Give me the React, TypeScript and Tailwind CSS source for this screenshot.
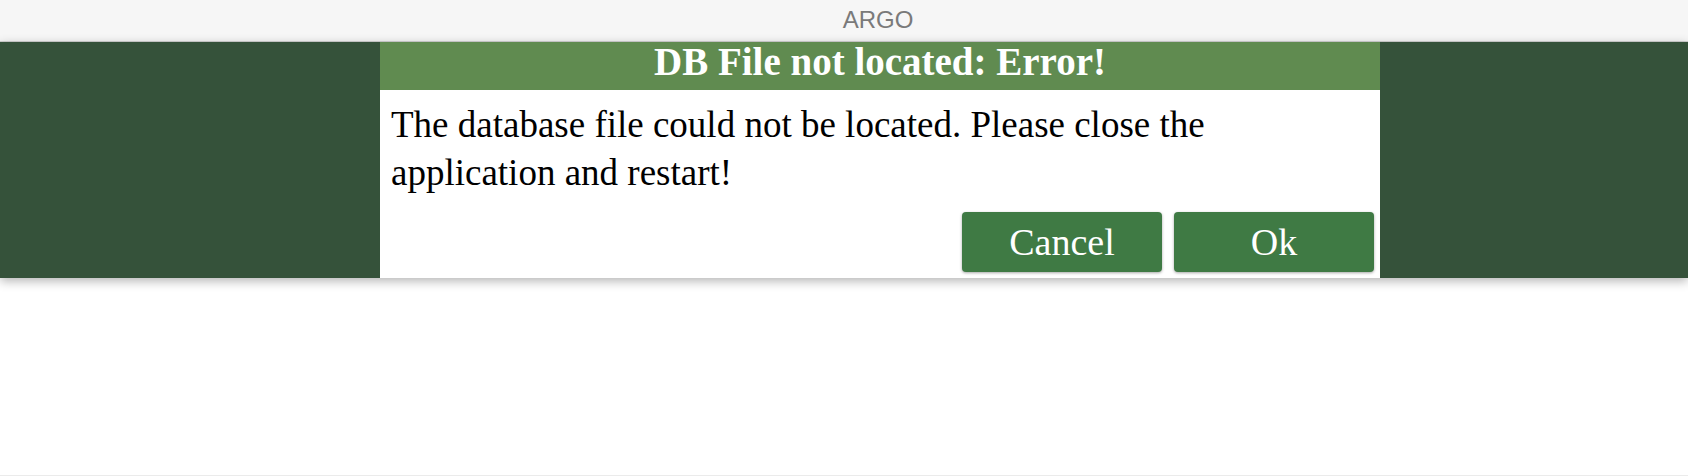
import React from 'react';

const serif = { fontFamily: '"Liberation Serif", "DejaVu Serif", serif' };

const DialogButton: React.FC<{ label: string }> = ({ label }) => (
  <button
    className="w-[200px] h-[60px] rounded-[4px] bg-[#3f7a44] text-white text-[38px] leading-none shadow-[0_1px_3px_rgba(0,0,0,0.35)]"
    style={serif}
  >
    {label}
  </button>
);

const App: React.FC = () => {
  return (
    <div className="w-[1688px] h-[476px] bg-white flex flex-col border-b border-[#ebebeb]">
      {/* window title */}
      <div className="h-[42px] bg-[#f6f6f6] border-b border-[#d2d2d2] flex items-center justify-center pl-[68px] pb-[2px]">
        <span
          className="text-[24px] text-[#7a7a7a]"
          style={{ fontFamily: '"Liberation Sans", Roboto, sans-serif' }}
        >
          ARGO
        </span>
      </div>

      {/* green band with modal */}
      <div className="h-[236px] bg-[#35523a] flex justify-center pl-[72px] shadow-[0_3px_10px_rgba(0,0,0,0.3)] relative">
        <div className="w-[1000px] bg-white flex flex-col" style={serif}>
          <div className="h-[48px] bg-[#608b50] text-white text-center font-bold text-[39px] leading-[38px] pt-[1px]">
            DB File not located: Error!
          </div>
          <p className="pt-[11px] pl-[11px] w-[920px] text-[37px] leading-[48px] text-black">
            The database file could not be located. Please close the application and restart!
          </p>
          <div className="flex justify-end gap-[12px] pr-[6px] mt-[15px]">
            <DialogButton label="Cancel" />
            <DialogButton label="Ok" />
          </div>
        </div>
      </div>
    </div>
  );
};

export default App;
